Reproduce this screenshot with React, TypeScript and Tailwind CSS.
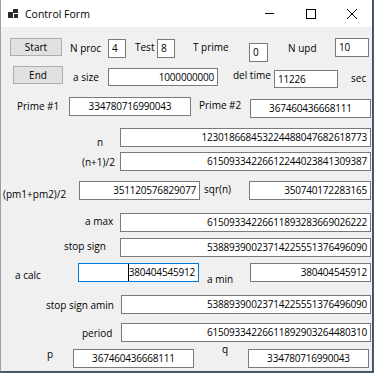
const font = "font-['Segoe_UI','Open_Sans',sans-serif]";

const box =
  "shrink-0 border border-[#7a7a7a] bg-white px-[3px] text-[10px] leading-[17px] tracking-[-0.2px] text-black whitespace-nowrap overflow-hidden";
const label = "shrink-0 h-[14px] text-[10px] leading-[14px] text-black whitespace-nowrap";
const btn =
  "shrink-0 border border-[#adadad] bg-[#e1e1e1] text-[10px] leading-[16px] text-black flex items-center justify-center";

function TitleBar() {
  return (
    <div className="flex h-[27px] items-center bg-white">
      <svg width="10" height="9" viewBox="0 0 10 9" className="ml-[7px]">
        <rect x="0" y="3" width="5" height="6" fill="#2b2b2b" />
        <rect x="5" y="0" width="5" height="4" fill="#2b2b2b" />
        <rect x="6" y="5" width="4" height="4" fill="#2b2b2b" />
      </svg>
      <span className="ml-[7px] text-[10.5px] leading-[14px] text-black">Control Form</span>
      <div className="ml-auto flex h-full">
        <div className="flex w-[41px] items-center justify-center">
          <svg width="9" height="9" viewBox="0 0 9 9">
            <line x1="0" y1="4.5" x2="9" y2="4.5" stroke="#000" strokeWidth="1" />
          </svg>
        </div>
        <div className="flex w-[41px] items-center justify-center">
          <svg width="10" height="10" viewBox="0 0 10 10">
            <rect x="0.5" y="0.5" width="9" height="9" fill="none" stroke="#000" strokeWidth="1" />
          </svg>
        </div>
        <div className="flex w-[41px] items-center justify-center">
          <svg width="10" height="10" viewBox="0 0 10 10">
            <line x1="0" y1="0" x2="10" y2="10" stroke="#000" strokeWidth="1" />
            <line x1="10" y1="0" x2="0" y2="10" stroke="#000" strokeWidth="1" />
          </svg>
        </div>
      </div>
    </div>
  );
}

export default function App() {
  return (
    <div className={`h-[373px] w-[374px] bg-[#4a5d70] ${font}`}>
      <div className="flex h-[372px] w-[373px] flex-col border-b border-l border-r border-b-[#3f5266] border-l-[#a0a0a0] border-r-[#3f5266] bg-[#f0f0f0]">
        <TitleBar />
        <div className="flex flex-col pt-[9px]">
          {/* row 1 */}
          <div className="flex h-[28px] items-start">
            <button className={`${btn} ml-[9px] mt-[2px] h-[18px] w-[52px]`}>Start</button>
            <span className={`${label} ml-[8px] mt-[5px] w-[38px]`}>N proc</span>
            <div className={`${box} mt-[3px] h-[19px] w-[18px]`}>4</div>
            <span className={`${label} ml-[9px] mt-[4px] w-[22px]`}>Test</span>
            <div className={`${box} mt-[3px] h-[19px] w-[18px]`}>8</div>
            <span className={`${label} ml-[18px] mt-[4px] w-[56px]`}>T prime</span>
            <div className={`${box} mt-[7px] h-[19px] w-[19px]`}>0</div>
            <span className={`${label} ml-[20px] mt-[5px] w-[47px]`}>N upd</span>
            <div className={`${box} mt-[2px] h-[19px] w-[34px]`}>10</div>
          </div>
          {/* row 2 */}
          <div className="flex h-[30px] items-start">
            <button className={`${btn} ml-[12px] mt-[2px] h-[18px] w-[50px]`}>End</button>
            <span className={`${label} ml-[10px] mt-[6px] w-[35px]`}>a size</span>
            <div className={`${box} mt-[4px] h-[18px] w-[110px] text-right leading-[16px]`}>1000000000</div>
            <span className={`${label} ml-[15px] mt-[4px] w-[41px]`}>del time</span>
            <div className={`${box} mt-[6px] h-[18px] w-[64px] leading-[16px]`}>11226</div>
            <span className={`${label} ml-[13px] mt-[7px]`}>sec</span>
          </div>
          {/* row 3 */}
          <div className="flex h-[30px] items-start">
            <span className={`${label} ml-[16px] mt-[5px] w-[52px]`}>Prime #1</span>
            <div className={`${box} mt-[3px] h-[19px] w-[122px] text-center`}>334780716990043</div>
            <span className={`${label} ml-[8px] mt-[4px] w-[51px]`}>Prime #2</span>
            <div className={`${box} mt-[5px] h-[19px] w-[121px] text-center`}>367460436668111</div>
          </div>
          {/* n */}
          <div className="flex h-[26px] items-start">
            <span className={`${label} ml-[96px] mt-[11px] w-[23px]`}>n</span>
            <div className={`${box} mt-[4px] h-[19px] w-[251px] text-right`}>123018668453224488047682618773</div>
          </div>
          {/* (n+1)/2 */}
          <div className="flex h-[28px] items-start">
            <span className={`${label} ml-[81px] mt-[5px] w-[38px]`}>(n+1)/2</span>
            <div className={`${box} mt-[2px] h-[19px] w-[251px] text-right`}>61509334226612244023841309387</div>
          </div>
          {/* (pm1+pm2)/2 */}
          <div className="flex h-[30px] items-start">
            <span className={`${label} ml-[2px] mt-[9px] w-[76px]`}>(pm1+pm2)/2</span>
            <div className={`${box} mt-[3px] h-[19px] w-[121px] text-right`}>351120576829077</div>
            <span className={`${label} ml-[4px] mt-[4px] w-[45px]`}>sqr(n)</span>
            <div className={`${box} mt-[3px] h-[19px] w-[122px] text-right`}>350740172283165</div>
          </div>
          {/* a max */}
          <div className="flex h-[27px] items-start">
            <span className={`${label} ml-[84px] mt-[6px] w-[35px]`}>a max</span>
            <div className={`${box} mt-[5px] h-[19px] w-[251px] text-right`}>61509334226611893283669026222</div>
          </div>
          {/* stop sign */}
          <div className="flex h-[25px] items-start">
            <span className={`${label} ml-[63px] mt-[4px] w-[56px]`}>stop sign</span>
            <div className={`${box} mt-[3px] h-[19px] w-[251px] text-right`}>53889390023714225551376496090</div>
          </div>
          {/* a calc */}
          <div className="flex h-[30px] items-start">
            <span className={`${label} ml-[14px] mt-[8px] w-[63px]`}>a calc</span>
            <div className={`${box} mt-[3px] flex h-[19px] w-[121px] justify-end border-[#0078d7]`}>
              <span className="border-l border-black">380404545912</span>
            </div>
            <span className={`${label} ml-[8px] mt-[12px] w-[43px]`}>a min</span>
            <div className={`${box} mt-[3px] h-[19px] w-[121px] text-right`}>380404545912</div>
          </div>
          {/* stop sign amin */}
          <div className="flex h-[30px] items-start">
            <span className={`${label} ml-[45px] mt-[8px] w-[75px]`}>stop sign amin</span>
            <div className={`${box} mt-[5px] h-[19px] w-[250px] text-right`}>53889390023714225551376496090</div>
          </div>
          {/* period */}
          <div className="flex h-[20px] items-start">
            <span className={`${label} ml-[81px] mt-[6px] w-[39px]`}>period</span>
            <div className={`${box} mt-[3px] h-[19px] w-[250px] text-right`}>61509334226611892903264480310</div>
          </div>
          {/* p q */}
          <div className="flex h-[30px] items-start">
            <span className={`${label} ml-[46px] mt-[7px] w-[26px]`}>p</span>
            <div className={`${box} mt-[9px] h-[19px] w-[121px] text-center`}>367460436668111</div>
            <span className={`${label} ml-[28px] mt-[2px] w-[26px]`}>q</span>
            <div className={`${box} mt-[9px] h-[19px] w-[121px] text-center`}>334780716990043</div>
          </div>
        </div>
      </div>
    </div>
  );
}
